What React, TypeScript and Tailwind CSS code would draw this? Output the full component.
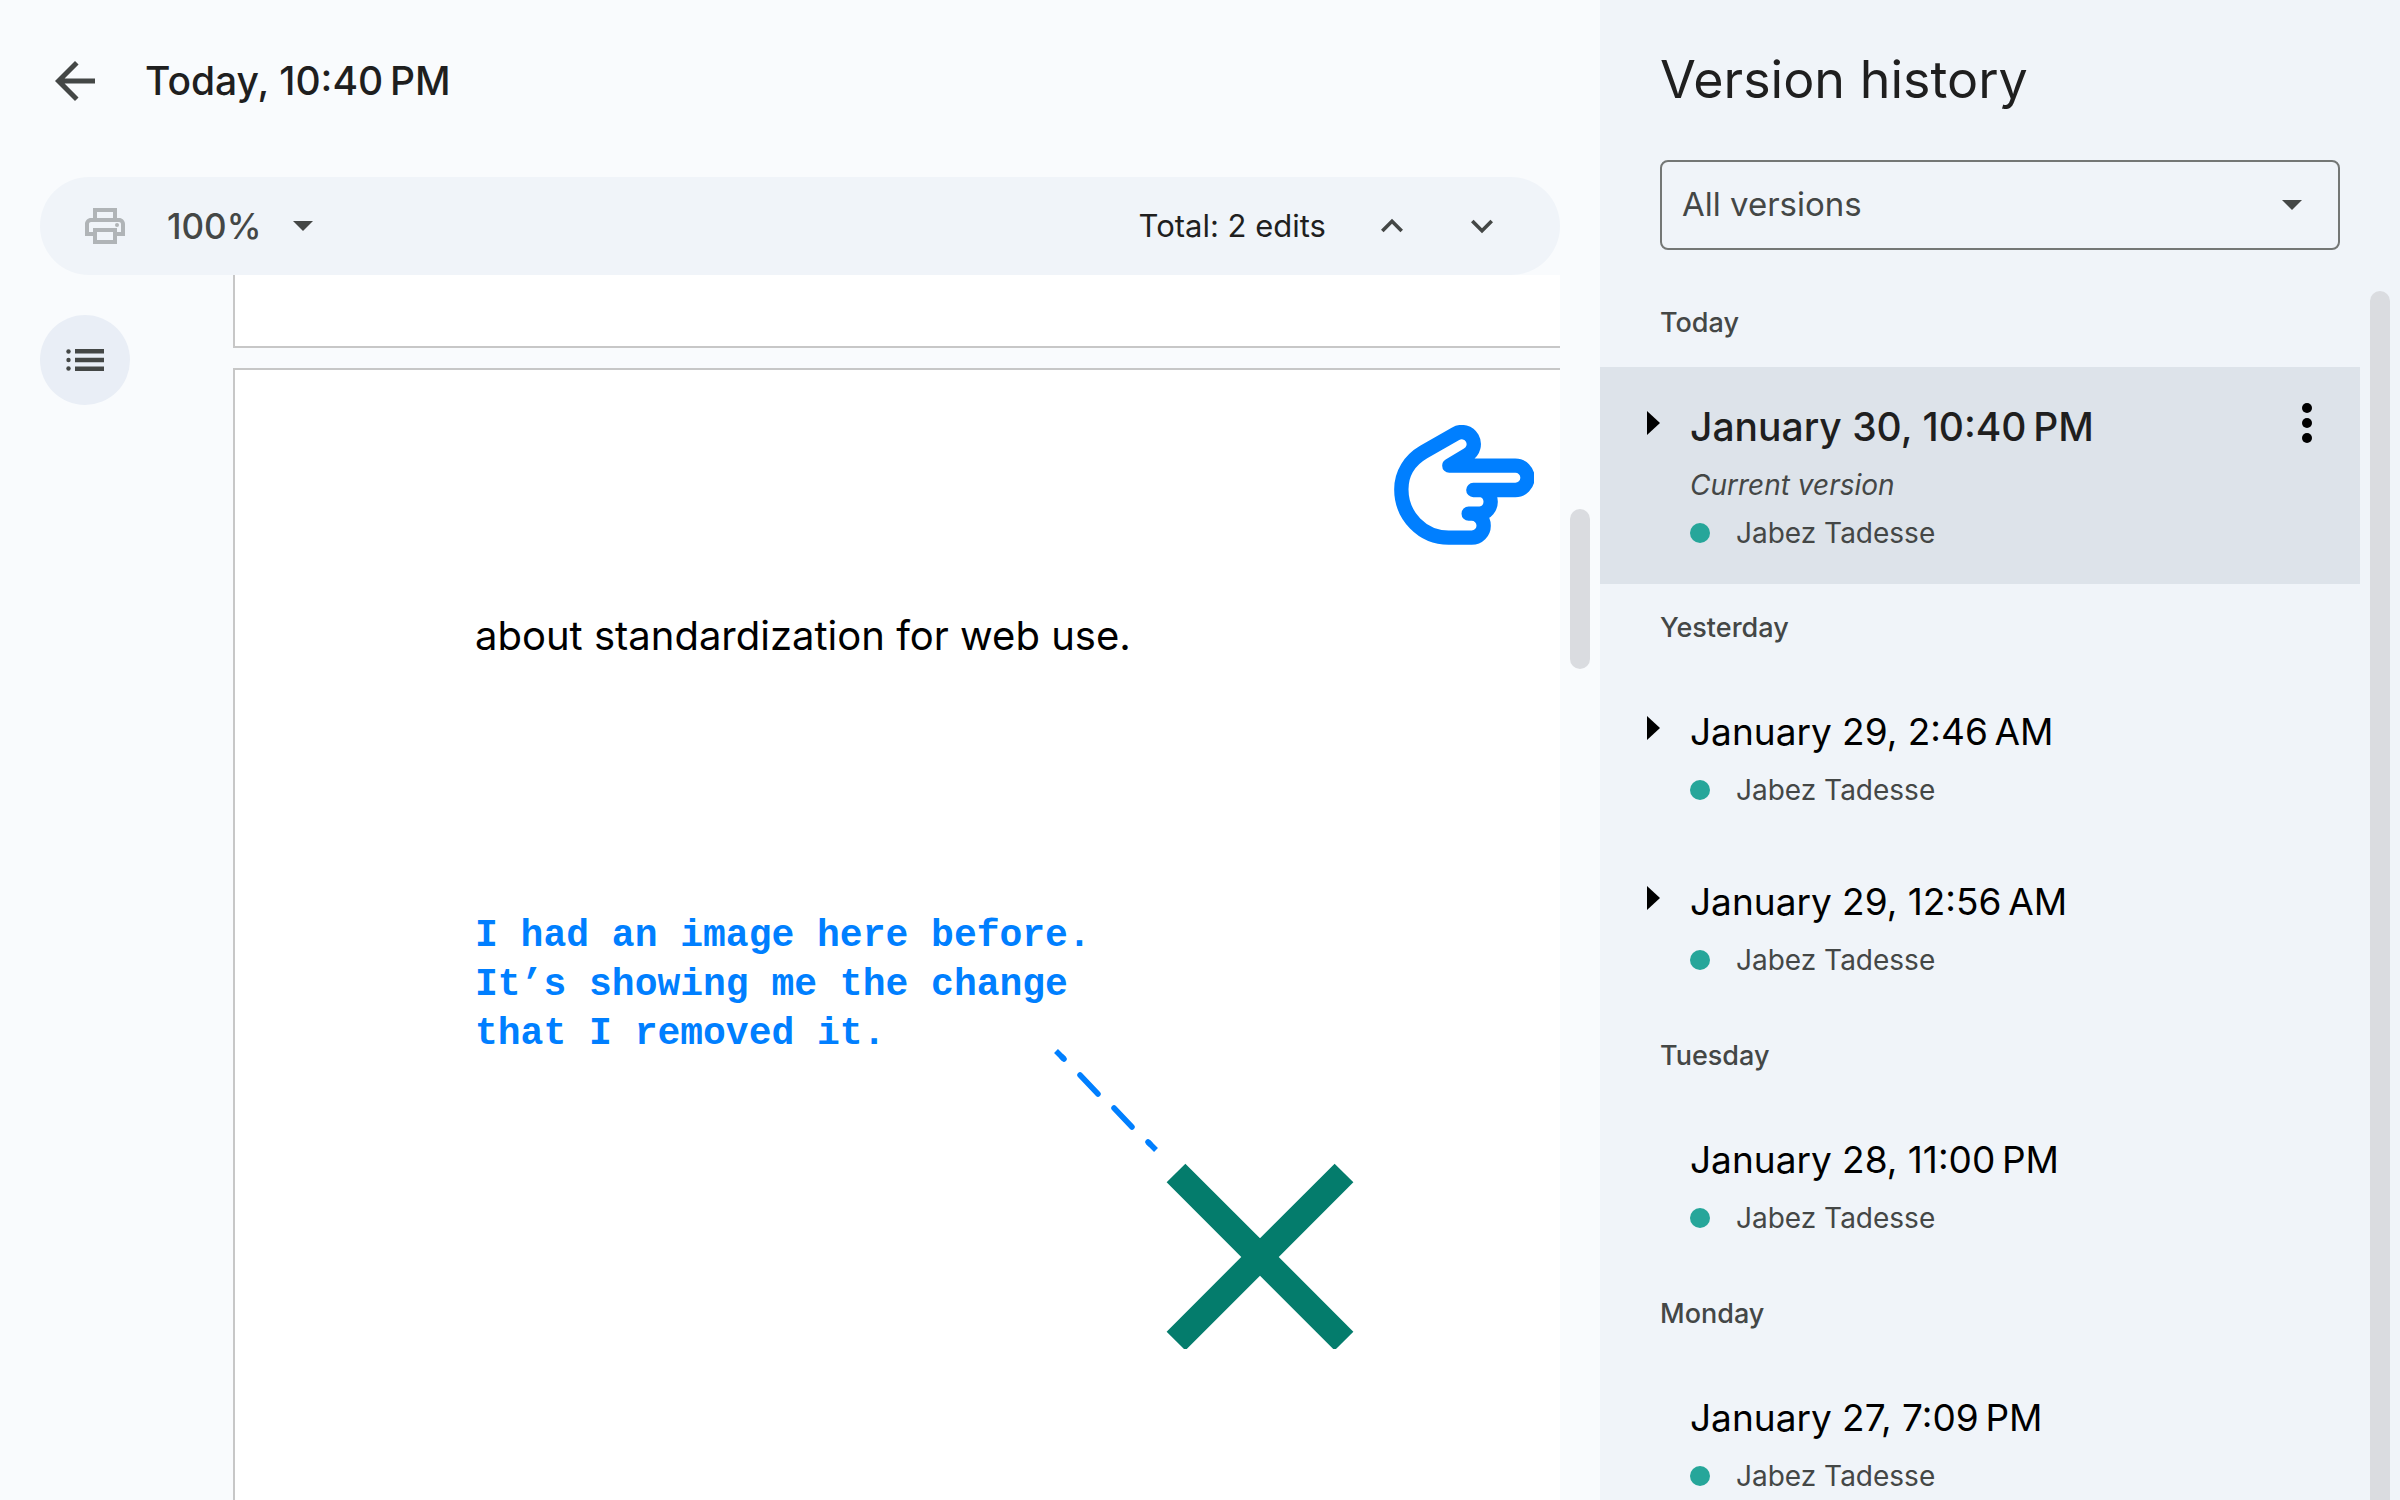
import React from "react";

type Version = {
  date: string;
  author: string;
  current?: boolean;
  expandable?: boolean;
};

const groups: { label: string; versions: Version[] }[] = [
  {
    label: "Today",
    versions: [
      {
        date: "January 30, 10:40\u202fPM",
        author: "Jabez Tadesse",
        current: true,
        expandable: true,
      },
    ],
  },
  {
    label: "Yesterday",
    versions: [
      { date: "January 29, 2:46\u202fAM", author: "Jabez Tadesse", expandable: true },
      { date: "January 29, 12:56\u202fAM", author: "Jabez Tadesse", expandable: true },
    ],
  },
  {
    label: "Tuesday",
    versions: [{ date: "January 28, 11:00\u202fPM", author: "Jabez Tadesse" }],
  },
  {
    label: "Monday",
    versions: [{ date: "January 27, 7:09\u202fPM", author: "Jabez Tadesse" }],
  },
];

const BackIcon = () => (
  <svg viewBox="0 0 24 24" className="size-[60px]" fill="#444746">
    <path d="M20 11H7.83l5.59-5.59L12 4l-8 8 8 8 1.41-1.41L7.83 13H20v-2z" />
  </svg>
);

const PrintIcon = () => (
  <svg viewBox="0 0 24 24" className="size-12" fill="#b0b4b7">
    <path d="M19 8h-1V3H6v5H5c-1.66 0-3 1.34-3 3v6h4v4h12v-4h4v-6c0-1.66-1.34-3-3-3zM8 5h8v3H8V5zm8 12v2H8v-4h8v2zm2-2v-2H6v2H4v-4c0-.55.45-1 1-1h14c.55 0 1 .45 1 1v4h-2z" />
    <circle cx="18" cy="11.5" r="1" />
  </svg>
);

const CaretIcon = ({ className = "" }: { className?: string }) => (
  <svg viewBox="0 0 20 10" className={`h-[10px] w-5 ${className}`} fill="#444746">
    <path d="M0 0h20L10 10z" />
  </svg>
);

const ChevronUp = () => (
  <svg viewBox="0 0 24 24" className="size-11" fill="#444746">
    <path d="M7.41 15.41 12 10.83l4.59 4.58L18 14l-6-6-6 6z" />
  </svg>
);

const ChevronDown = () => (
  <svg viewBox="0 0 24 24" className="size-11" fill="#444746">
    <path d="M7.41 8.59 12 13.17l4.59-4.58L18 10l-6 6-6-6z" />
  </svg>
);

const ListIcon = () => (
  <svg viewBox="0 0 38 22" className="h-[22px] w-[38px]" fill="#444746">
    <circle cx="2.5" cy="2.5" r="2.2" />
    <circle cx="2.5" cy="11" r="2.2" />
    <circle cx="2.5" cy="19.5" r="2.2" />
    <path d="M9 0h29v4.5H9zM9 8.8h29v4.5H9zM9 17.5h29V22H9z" />
  </svg>
);

const HandIcon = () => (
  <svg
    viewBox="102 105 420 360"
    className="absolute top-[55px] right-[26px] h-[120px] w-[140px]"
    fill="none"
    stroke="#007fff"
    strokeWidth="43"
    strokeLinecap="round"
    strokeLinejoin="round"
  >
    <path d="M326 371h44M340 300H466a36 36 0 0 0 0-73H268L323 194A36 36 0 0 0 287 131L191 186C150 210 124 250 124 298C124 378 187 443 266 443H335A36 36 0 0 0 335 371M362 300A36 36 0 0 1 362 371" />
  </svg>
);

const RemovedMark = () => (
  <svg
    viewBox="0 0 300 300"
    className="absolute top-[679px] left-[819px] size-[300px]"
    fill="none"
  >
    <g stroke="#007fff" strokeWidth="5.5">
      <path d="M2 2l8 8M94 93l8 8" />
      <path d="M8 8l2 2M26 26l18 19M60 59l18 19M94 93l2 2" strokeLinecap="round" />
    </g>
    <path d="M122 124l168 168M290 124l-168 168" stroke="#047c6c" strokeWidth="26.5" />
  </svg>
);

const Toolbar = () => (
  <div className="relative z-10 flex h-[98px] shrink-0 items-center rounded-full bg-[#f0f4f9] pr-14 pl-[41px]">
    <button aria-label="Print">
      <PrintIcon />
    </button>
    <div className="relative ml-[38px] flex items-center">
      <select
        aria-label="Zoom"
        className="w-[150px] appearance-none bg-transparent text-[35px] leading-12 font-medium text-[#444746]"
      >
        <option>100%</option>
      </select>
      <CaretIcon className="pointer-events-none absolute right-1" />
    </div>
    <span className="ml-auto text-[31px] leading-12 text-[#1f1f1f]">Total: 2 edits</span>
    <div className="ml-11 flex gap-[46px]">
      <button aria-label="Previous edit">
        <ChevronUp />
      </button>
      <button aria-label="Next edit">
        <ChevronDown />
      </button>
    </div>
  </div>
);

const VersionRow = ({ date, author, current, expandable }: Version) => (
  <li className={`flex pt-9 pr-7 ${current ? "bg-[#dde3ea] pb-[27px]" : "pb-7"}`}>
    <div className="w-[90px] shrink-0 pl-[47px]">
      {expandable && (
        <button aria-label={`Expand ${date}`} className="flex h-10 items-center">
          <svg viewBox="0 0 13 24" className="h-6 w-[13px]">
            <path d="M0 0l13 12L0 24z" />
          </svg>
        </button>
      )}
    </div>
    <div className="grow">
      <h3
        className={`mb-[10px] leading-12 ${
          current ? "text-[39px] font-medium text-[#1f1f1f]" : "text-[37px] text-black"
        }`}
      >
        {date}
      </h3>
      {current && (
        <p className="text-[28px] leading-12 text-[#444746] italic">Current version</p>
      )}
      <p className="flex items-center gap-[26px] text-[28px] leading-12 text-[#444746]">
        <span className="size-5 rounded-full bg-[#26a69a]" />
        {author}
      </p>
    </div>
    {current && (
      <button aria-label="More actions" className="h-10 w-[50px]">
        <svg viewBox="0 0 50 40" className="h-10 w-[50px]">
          <circle cx="25" cy="5" r="5" />
          <circle cx="25" cy="20" r="5" />
          <circle cx="25" cy="35" r="5" />
        </svg>
      </button>
    )}
  </li>
);

const Sidebar = () => (
  <aside className="flex w-1/3 shrink-0 flex-col bg-[#f0f4f9]">
    <div className="pt-12 pr-[60px] pl-[60px]">
      <h2 className="text-[52px] leading-16 text-[#1f1f1f]">Version history</h2>
      <div className="relative mt-12 flex items-center">
        <select
          aria-label="Filter versions"
          className="h-[90px] w-full appearance-none rounded-lg border-2 border-[#747775] bg-transparent px-5 text-[33px] text-[#444746]"
        >
          <option>All versions</option>
        </select>
        <CaretIcon className="pointer-events-none absolute right-[38px]" />
      </div>
    </div>
    <div className="mt-[29px] flex min-h-0 grow">
      <div className="grow overflow-hidden">
        {groups.map((group) => (
          <section key={group.label}>
            <h3 className="pl-[60px] text-[27px] leading-[88px] font-medium text-[#444746]">
              {group.label}
            </h3>
            <ul>
              {group.versions.map((version) => (
                <VersionRow key={version.date} {...version} />
              ))}
            </ul>
          </section>
        ))}
      </div>
      <div className="mt-3 mr-[10px] ml-[10px] w-5 shrink-0 rounded-t-full bg-[#dadce0]" />
    </div>
  </aside>
);

const App = () => {
  return (
    <div className="flex h-screen overflow-hidden bg-[#f9fbfd] font-['Inter',sans-serif]">
      <main className="flex min-w-0 grow">
        <div className="flex min-w-0 grow flex-col pl-10">
          <header className="flex items-center gap-10 pt-[51px] pb-[66px] pl-[5px]">
            <button aria-label="Back">
              <BackIcon />
            </button>
            <h1 className="text-[39px] leading-12 font-medium text-[#1f1f1f]">
              Today, 10:40{"\u202f"}PM
            </h1>
          </header>
          <Toolbar />
          <div className="flex min-h-0 grow">
            <div className="w-[193px] shrink-0 pt-10">
              <button
                aria-label="Show outline"
                className="flex size-[90px] items-center justify-center rounded-full bg-[#e9eef6]"
              >
                <ListIcon />
              </button>
            </div>
            <div className="flex min-w-0 grow flex-col gap-5">
              <div className="h-[73px] shrink-0 border-b-2 border-l-2 border-[#c7c7c7] bg-white" />
              <article className="relative grow border-t-2 border-l-2 border-[#c7c7c7] bg-white pt-[241px] pl-60">
                <HandIcon />
                <p className="text-[40px] leading-[50px] text-black">
                  about standardization for web use.
                </p>
                <p className="mt-[250px] font-['Liberation_Mono',monospace] text-[38px] leading-[49px] font-bold text-[#007fff]">
                  I had an image here before.
                  <br />
                  It’s showing me the change
                  <br />
                  that I removed it.
                </p>
                <RemovedMark />
              </article>
            </div>
          </div>
        </div>
        <div className="w-10 shrink-0 pt-[509px]">
          <div className="ml-[10px] h-[160px] w-5 rounded-full bg-[#dadce0]" />
        </div>
      </main>
      <Sidebar />
    </div>
  );
};

export default App;
